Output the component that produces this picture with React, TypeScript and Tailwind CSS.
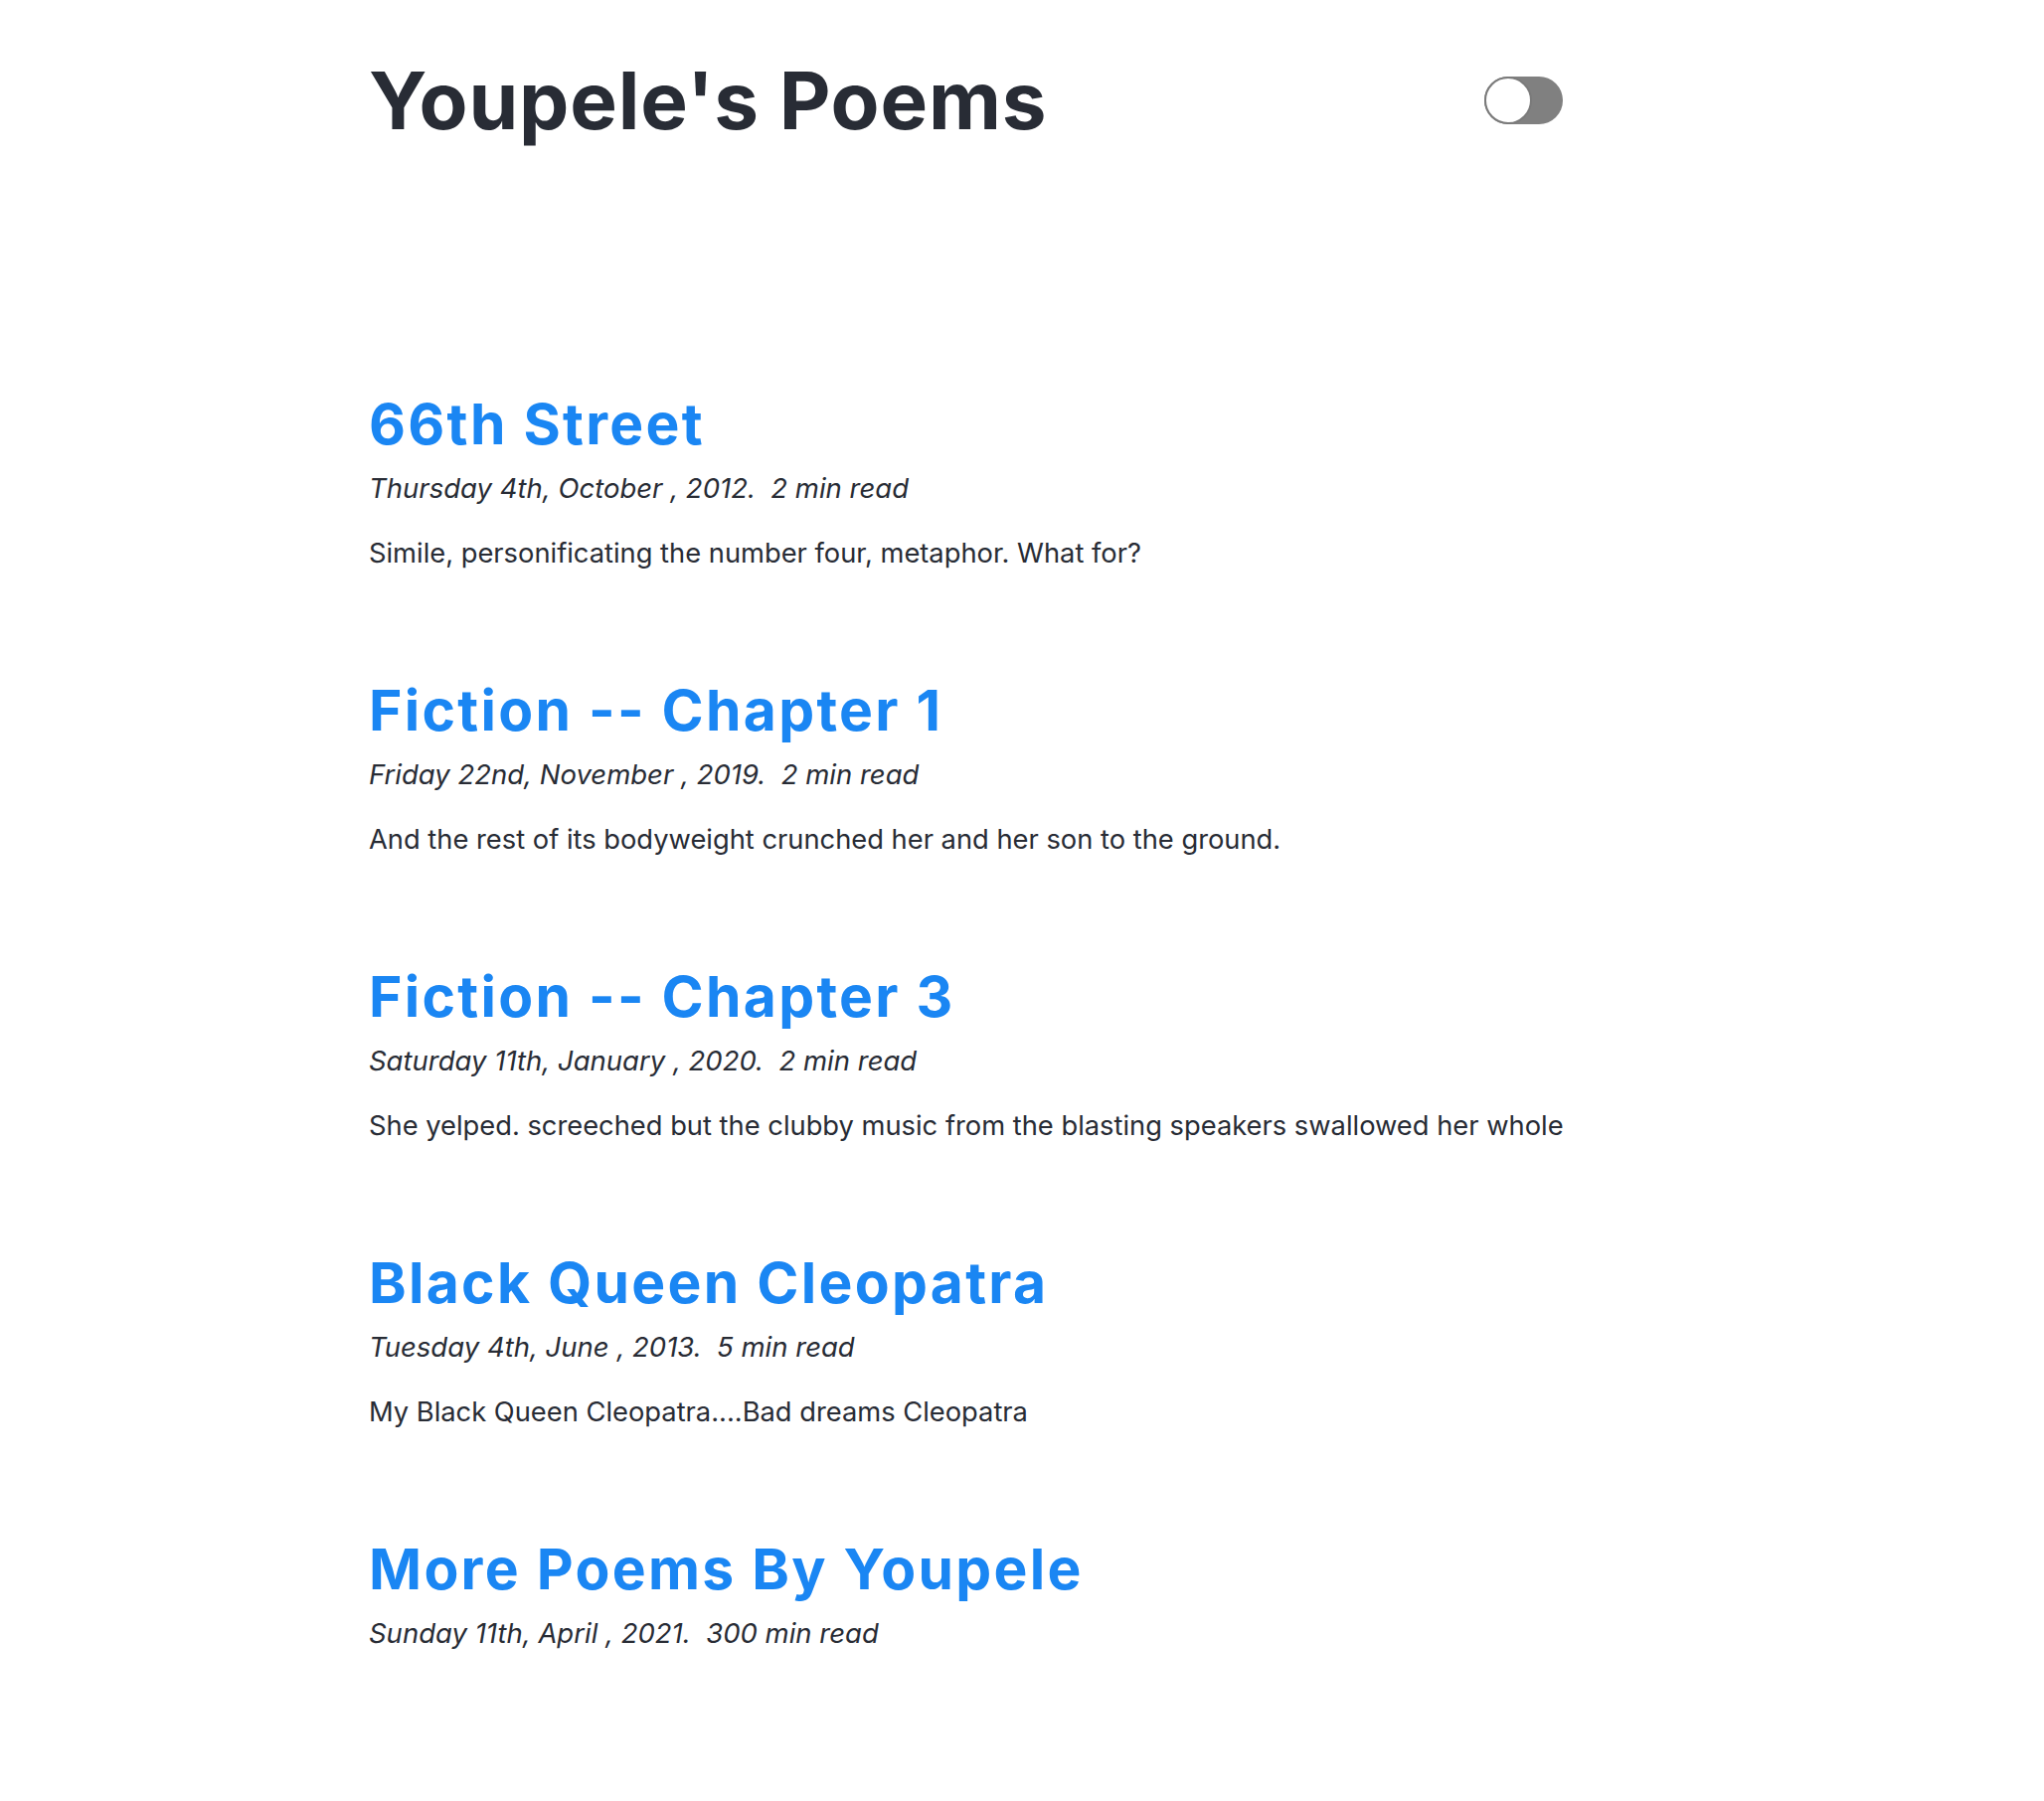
const posts = [
  {
    title: "66th Street",
    date: "Thursday 4th, October , 2012.",
    read: "2 min read",
    excerpt: "Simile, personificating the number four, metaphor. What for?",
  },
  {
    title: "Fiction -- Chapter 1",
    date: "Friday 22nd, November , 2019.",
    read: "2 min read",
    excerpt: "And the rest of its bodyweight crunched her and her son to the ground.",
  },
  {
    title: "Fiction -- Chapter 3",
    date: "Saturday 11th, January , 2020.",
    read: "2 min read",
    excerpt:
      "She yelped. screeched but the clubby music from the blasting speakers swallowed her whole",
  },
  {
    title: "Black Queen Cleopatra",
    date: "Tuesday 4th, June , 2013.",
    read: "5 min read",
    excerpt: "My Black Queen Cleopatra....Bad dreams Cleopatra",
  },
  {
    title: "More Poems By Youpele",
    date: "Sunday 11th, April , 2021.",
    read: "300 min read",
    excerpt: "",
  },
];

function Toggle() {
  return (
    <div className="relative w-[79px] h-[48px] rounded-full bg-[#808080]">
      <div className="absolute left-0 top-0 w-[48px] h-[48px] rounded-full bg-white border-2 border-[#7a7a7a]" />
    </div>
  );
}

export default function App() {
  return (
    <div className="min-h-[1812px] bg-white text-[#282c35] font-['Inter',sans-serif]">
      <div className="ml-[371px] w-[1201px] pt-[52px] pb-[100px]">
        <header className="flex items-center justify-between">
          <h1 className="text-[80px] leading-[98px] font-bold tracking-[0.01em]">
            Youpele&apos;s Poems
          </h1>
          <Toggle />
        </header>
        <main className="mt-[245px] flex flex-col gap-[106px]">
          {posts.map((p) => (
            <article key={p.title}>
              <h3 className="text-[57px] leading-[64px] font-bold tracking-[0.04em] text-[#1a86f3]">
                <a href="#">{p.title}</a>
              </h3>
              <p className="mt-[12px] text-[27.5px] leading-[40px] italic">
                {p.date}&nbsp;&nbsp;{p.read}
              </p>
              {p.excerpt && (
                <p className="mt-[26px] text-[27.3px] leading-[40px] whitespace-nowrap">
                  {p.excerpt}
                </p>
              )}
            </article>
          ))}
        </main>
      </div>
    </div>
  );
}
